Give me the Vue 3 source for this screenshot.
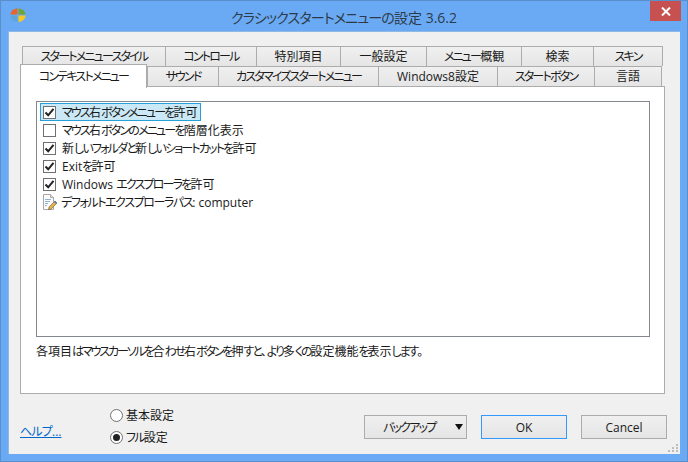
<template>
  <div class="window">
    <header class="titlebar">
      <svg class="app-icon" width="16" height="15" viewBox="0 0 16 15" aria-hidden="true">
        <path d="M7.5 .5 C4 .6 1.2 2.5 .4 6.5 L7.5 6.5 Z" fill="#e8642a" />
        <path d="M8.5 .5 C12 .6 15 2.5 15.7 6.5 L8.5 6.5 Z" fill="#6fa63a" />
        <path d="M.4 7.5 L7.5 7.5 L7.5 14 C5 13.8 3 13 2 12 C1 10.8 .5 9 .4 7.5 Z" fill="#5ea6d8" />
        <path d="M8.5 7.5 L15.7 7.5 C15.4 9.5 14.6 11 13.4 12 C12 13.2 10 14 8.5 14 Z" fill="#f8c820" />
      </svg>
      <h1 class="title">
        <span v-for="(r, i) in runs(titleText)" :key="i" :class="{ kana: r.kana }">{{ r.text }}</span>
      </h1>
      <button type="button" class="close" aria-label="閉じる">
        <svg width="10" height="9" viewBox="0 0 10 9" aria-hidden="true">
          <path d="M1 .5 L9 8.5 M9 .5 L1 8.5" stroke="#fff" stroke-width="2" fill="none" />
        </svg>
      </button>
    </header>

    <main class="client">
      <div class="tabs">
        <div v-for="(row, i) in tabRows" :key="i" class="tab-row" :class="`tab-row--${i}`">
          <div
            v-for="tab in row"
            :key="tab.label"
            class="tab"
            :class="{ 'tab--active': tab.active }"
            :style="{ width: tab.w + 'px' }"
          >
            <span v-for="(r, k) in runs(tab.label)" :key="k" :class="{ kana: r.kana }">{{ r.text }}</span>
          </div>
        </div>
      </div>

      <section class="panel">
        <div class="list">
          <div v-for="item in items" :key="item.label" class="item" :class="{ 'item--doc': item.doc }">
            <span class="item-inner" :class="{ 'item-inner--selected': item.selected }">
              <svg v-if="item.doc" class="doc-icon" width="16" height="16" viewBox="0 0 16 16" aria-hidden="true">
                <path d="M1.5 .5 H8.5 L11.5 3.5 V15.5 H1.5 Z" fill="#fbfbfb" stroke="#a9a9a9" />
                <path d="M8.5 .5 V3.5 H11.5" fill="#e4e4e4" stroke="#a9a9a9" />
                <path d="M3 5.5 H9 M3 7.5 H8 M3 9.5 H6 M3 11.5 H5" stroke="#8fb3d0" />
                <path d="M7 13 L13 7 L15 9 L9 15 L6.5 15.5 Z" fill="#e8b44a" stroke="#7d6a3c" stroke-width=".7" />
                <path d="M12.5 7.5 L14.5 9.5" stroke="#4c7fb5" stroke-width="1.4" />
              </svg>
              <span v-else class="check">
                <svg v-if="item.checked" width="11" height="11" viewBox="0 0 11 11" aria-hidden="true">
                  <path d="M1.5 5.5 L4.2 8.3 L9.5 1.8" stroke="#222" stroke-width="2" fill="none" />
                </svg>
              </span>
              <span class="item-label">
                <span v-for="(r, k) in runs(item.label)" :key="k" :class="{ kana: r.kana }">{{ r.text }}</span>
              </span>
            </span>
          </div>
        </div>
        <p class="note">
          <span v-for="(r, k) in runs(noteText)" :key="k" :class="{ kana: r.kana }">{{ r.text }}</span>
        </p>
      </section>

      <footer class="footer">
        <a class="help" href="#"><span class="kana">ヘルプ</span>...</a>
        <div class="radios">
          <label class="radio"><span class="radio-dot"></span>基本設定</label>
          <label class="radio"><span class="radio-dot radio-dot--on"></span><span><span class="kana">フル</span>設定</span></label>
        </div>
        <div class="buttons">
          <button type="button" class="btn btn--backup">
            <span class="kana">バックアップ</span>
            <span class="caret"></span>
          </button>
          <button type="button" class="btn btn--default">OK</button>
          <button type="button" class="btn">Cancel</button>
        </div>
      </footer>

      <svg class="grip" width="12" height="9" viewBox="0 0 12 9" aria-hidden="true">
        <path d="M8 0h2v2H8z M4 3h2v2H4z M8 3h2v2H8z M0 6h2v2H0z M4 6h2v2H4z M8 6h2v2H8z" fill="#bcbcbc" />
      </svg>
    </main>
  </div>
</template>

<script setup>
const titleText = 'クラシックスタートメニューの設定 3.6.2'
const noteText = '各項目はマウスカーソルを合わせ右ボタンを押すと、より多くの設定機能を表示します。'

const tabRows = [
  [
    { label: 'スタートメニュースタイル', w: 143 },
    { label: 'コントロール', w: 91 },
    { label: '特別項目', w: 84 },
    { label: '一般設定', w: 86 },
    { label: 'メニュー概観', w: 95 },
    { label: '検索', w: 72 },
    { label: 'スキン', w: 70 }
  ],
  [
    { label: 'コンテキストメニュー', w: 127, active: true },
    { label: 'サウンド', w: 71 },
    { label: 'カスタマイズスタートメニュー', w: 160 },
    { label: 'Windows8設定', w: 119 },
    { label: 'スタートボタン', w: 97 },
    { label: '言語', w: 68 }
  ]
]

const items = [
  { label: 'マウス右ボタンメニューを許可', checked: true, selected: true },
  { label: 'マウス右ボタンのメニューを階層化表示', checked: false },
  { label: '新しいフォルダと新しいショートカットを許可', checked: true },
  { label: 'Exitを許可', checked: true },
  { label: 'Windows エクスプローラを許可', checked: true },
  { label: 'デフォルトエクスプローラパス: computer', doc: true }
]

// the original UI font has narrow kana, so kana runs get tighter tracking than kanji
function runs(text) {
  return text
    .split(/([\u3040-\u30ff]+)/)
    .filter(Boolean)
    .map((part) => ({ text: part, kana: /^[\u3040-\u30ff]/.test(part) }))
}
</script>

<style>
html,
body {
  margin: 0;
  overflow: hidden;
}
</style>

<style scoped>
.window {
  box-sizing: border-box;
  width: 688px;
  height: 462px;
  display: flex;
  flex-direction: column;
  padding: 0 7px 7px;
  background: #6aaaf5;
  border: 1px solid #5b8fcb;
  font-family: "Open Sans", "Noto Sans CJK JP", sans-serif;
  font-feature-settings: "palt";
  font-size: 12px;
  color: #1a1a1a;
}

.kana {
  letter-spacing: -1.8px;
}

.titlebar {
  height: 30px;
  flex-shrink: 0;
  display: grid;
  grid-template-columns: 1fr auto 1fr;
  align-items: start;
}

.app-icon {
  margin: 7px 0 0 2px;
}

.title {
  margin: 7px 0 0;
  font-size: 14px;
  font-weight: 400;
  line-height: 20px;
  color: #2e3a47;
  white-space: nowrap;
}

.title .kana {
  letter-spacing: -0.8px;
}

.close {
  justify-self: end;
  width: 31px;
  height: 20px;
  margin-right: -1px;
  padding: 0;
  display: flex;
  align-items: center;
  justify-content: center;
  border: 0;
  background: #c75050;
}

.client {
  position: relative;
  flex: 1;
  display: flex;
  flex-direction: column;
  padding: 14px 13px 0 11px;
  background: #f0f0f0;
  border: 1px solid #8fb8e4;
  border-width: 1px 0 0 1px;
}

.tabs {
  display: flex;
  flex-direction: column;
}

.tab-row {
  display: flex;
  height: 20px;
}

.tab-row--0 {
  margin-left: 2px;
}

.tab {
  box-sizing: border-box;
  display: flex;
  align-items: center;
  justify-content: center;
  border: 1px solid #acacac;
  border-bottom: 0;
  border-right-width: 0;
  background: linear-gradient(#f0f0f0, #e5e5e5);
  white-space: nowrap;
  line-height: 1;
}

.tab:last-child {
  border-right-width: 1px;
}

.tab--active {
  position: relative;
  z-index: 1;
  height: 24px;
  margin-top: -2px;
  background: #fff;
  border-right-width: 1px;
}

.panel {
  box-sizing: border-box;
  height: 308px;
  width: 645px;
  padding: 14px 14px 0 15px;
  background: #fff;
  border: 1px solid #acacac;
}

.list {
  box-sizing: border-box;
  height: 236px;
  padding: 1px 3px;
  border: 1px solid #828790;
}

.item {
  height: 18px;
  display: flex;
  align-items: center;
}

.item--doc .kana {
  letter-spacing: -1.4px;
}

.item-inner {
  box-sizing: border-box;
  height: 18px;
  display: flex;
  align-items: center;
  padding: 0 2px;
  border: 1px solid transparent;
  white-space: nowrap;
}

.item-inner--selected {
  background: #cbe8f6;
  border-color: #26a0da;
}

.check {
  box-sizing: border-box;
  width: 13px;
  height: 13px;
  display: flex;
  align-items: center;
  justify-content: center;
  flex-shrink: 0;
  margin-right: 6px;
  background: #fff;
  border: 1px solid #707070;
}

.doc-icon {
  flex-shrink: 0;
  margin: 0 3px 0 -1px;
}

.note {
  margin: 7px 0 0;
  line-height: 16px;
  white-space: nowrap;
}

.note .kana {
  letter-spacing: -2.1px;
}

.footer {
  flex: 1;
  display: flex;
}

.help {
  margin: 30px 0 0;
  width: 90px;
  color: #0066cc;
  text-decoration: underline;
  line-height: 16px;
  align-self: flex-start;
}

.help .kana {
  letter-spacing: -0.8px;
}

.radios {
  display: flex;
  flex-direction: column;
  gap: 6px;
  padding-top: 13px;
}

.radio {
  display: flex;
  align-items: center;
  gap: 3px;
  height: 16px;
}

.radio-dot {
  box-sizing: border-box;
  width: 13px;
  height: 13px;
  border-radius: 50%;
  border: 1px solid #707070;
  background: #fff;
  display: flex;
  align-items: center;
  justify-content: center;
}

.radio-dot--on::after {
  content: "";
  width: 7px;
  height: 7px;
  border-radius: 50%;
  background: #222;
}

.buttons {
  margin-left: auto;
  display: flex;
  gap: 14px;
  padding-top: 21px;
  align-items: flex-start;
}

.btn {
  box-sizing: border-box;
  width: 86px;
  height: 24px;
  padding: 0;
  font: inherit;
  font-feature-settings: inherit;
  color: inherit;
  background: linear-gradient(#f0f0f0, #e5e5e5);
  border: 1px solid #acacac;
}

.btn--default {
  border-color: #3399ff;
}

.btn--backup {
  width: 103px;
  display: flex;
  align-items: center;
  justify-content: space-between;
  padding: 0 3px 0 18px;
}

.caret {
  width: 0;
  height: 0;
  border: 4px solid transparent;
  border-top: 6px solid #111;
  border-bottom: 0;
}

.grip {
  position: absolute;
  right: 0;
  bottom: 1px;
}
</style>
